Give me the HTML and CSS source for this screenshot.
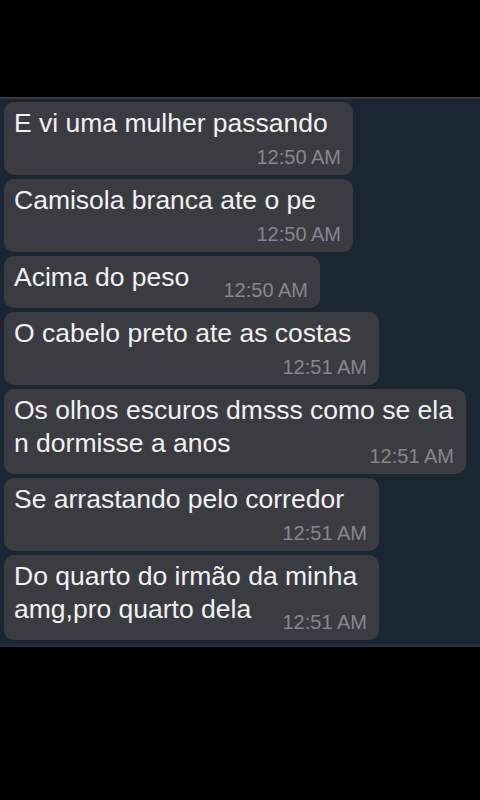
FILE: index.html
```html
<!DOCTYPE html>
<html lang="pt">
  <head>
    <meta charset="UTF-8" />
    <meta name="viewport" content="width=device-width, initial-scale=1.0" />
    <title>Conversa</title>

    <link rel="stylesheet" href="styles.css">
  </head>
  <body>
    <div class="top"></div>
    <div class="chat">
      <div class="bubble stacked medium">
        <div class="line">E vi uma mulher passando</div>
        <span class="time">12:50 AM</span>
      </div>
      <div class="bubble stacked medium">
        <div class="line">Camisola branca ate o pe</div>
        <span class="time">12:50 AM</span>
      </div>
      <div class="bubble narrow">
        <div class="row">
          <span class="line">Acima do peso</span>
          <span class="time">12:50 AM</span>
        </div>
      </div>
      <div class="bubble stacked wide">
        <div class="line">O cabelo preto ate as costas</div>
        <span class="time">12:51 AM</span>
      </div>
      <div class="bubble full">
        <div class="line">Os olhos escuros dmsss como se ela</div>
        <div class="row">
          <span class="line">n dormisse a anos</span>
          <span class="time">12:51 AM</span>
        </div>
      </div>
      <div class="bubble stacked wide">
        <div class="line">Se arrastando pelo corredor</div>
        <span class="time">12:51 AM</span>
      </div>
      <div class="bubble wide">
        <div class="line">Do quarto do irmão da minha</div>
        <div class="row">
          <span class="line">amg,pro quarto dela</span>
          <span class="time">12:51 AM</span>
        </div>
      </div>
    </div>
  </body>
</html>
```

FILE: styles.css
```css
* {
  box-sizing: border-box;
  margin: 0;
  padding: 0;
}

body {
  background-color: #000;
  font-family: "Liberation Sans", Arial, sans-serif;
}

.top {
  height: 97px;
}

.chat {
  display: flex;
  flex-direction: column;
  align-items: flex-start;
  gap: 4px;
  background-color: #1b2633;
  border-top: 2px solid #373b41;
  border-bottom: 3px solid #2a2f36;
  padding: 3px 0 4px 4px;
}

.bubble {
  background-color: #3b3c41;
  color: #f1f1f1;
  border-radius: 10px;
  padding: 5px 12px 6px 10px;
  font-size: 26.5px;
  line-height: 33px;
}

.narrow {
  width: 316px;
}

.medium {
  width: 349px;
}

.wide {
  width: 375px;
}

.full {
  width: 462px;
}

.time {
  font-size: 20px;
  line-height: 24px;
  color: #86878b;
  white-space: nowrap;
}

.stacked .time {
  display: block;
  text-align: right;
  margin-top: 5px;
}

.row {
  display: flex;
  justify-content: space-between;
  align-items: flex-end;
}

.row .line {
  margin-bottom: 8px;
}
```
